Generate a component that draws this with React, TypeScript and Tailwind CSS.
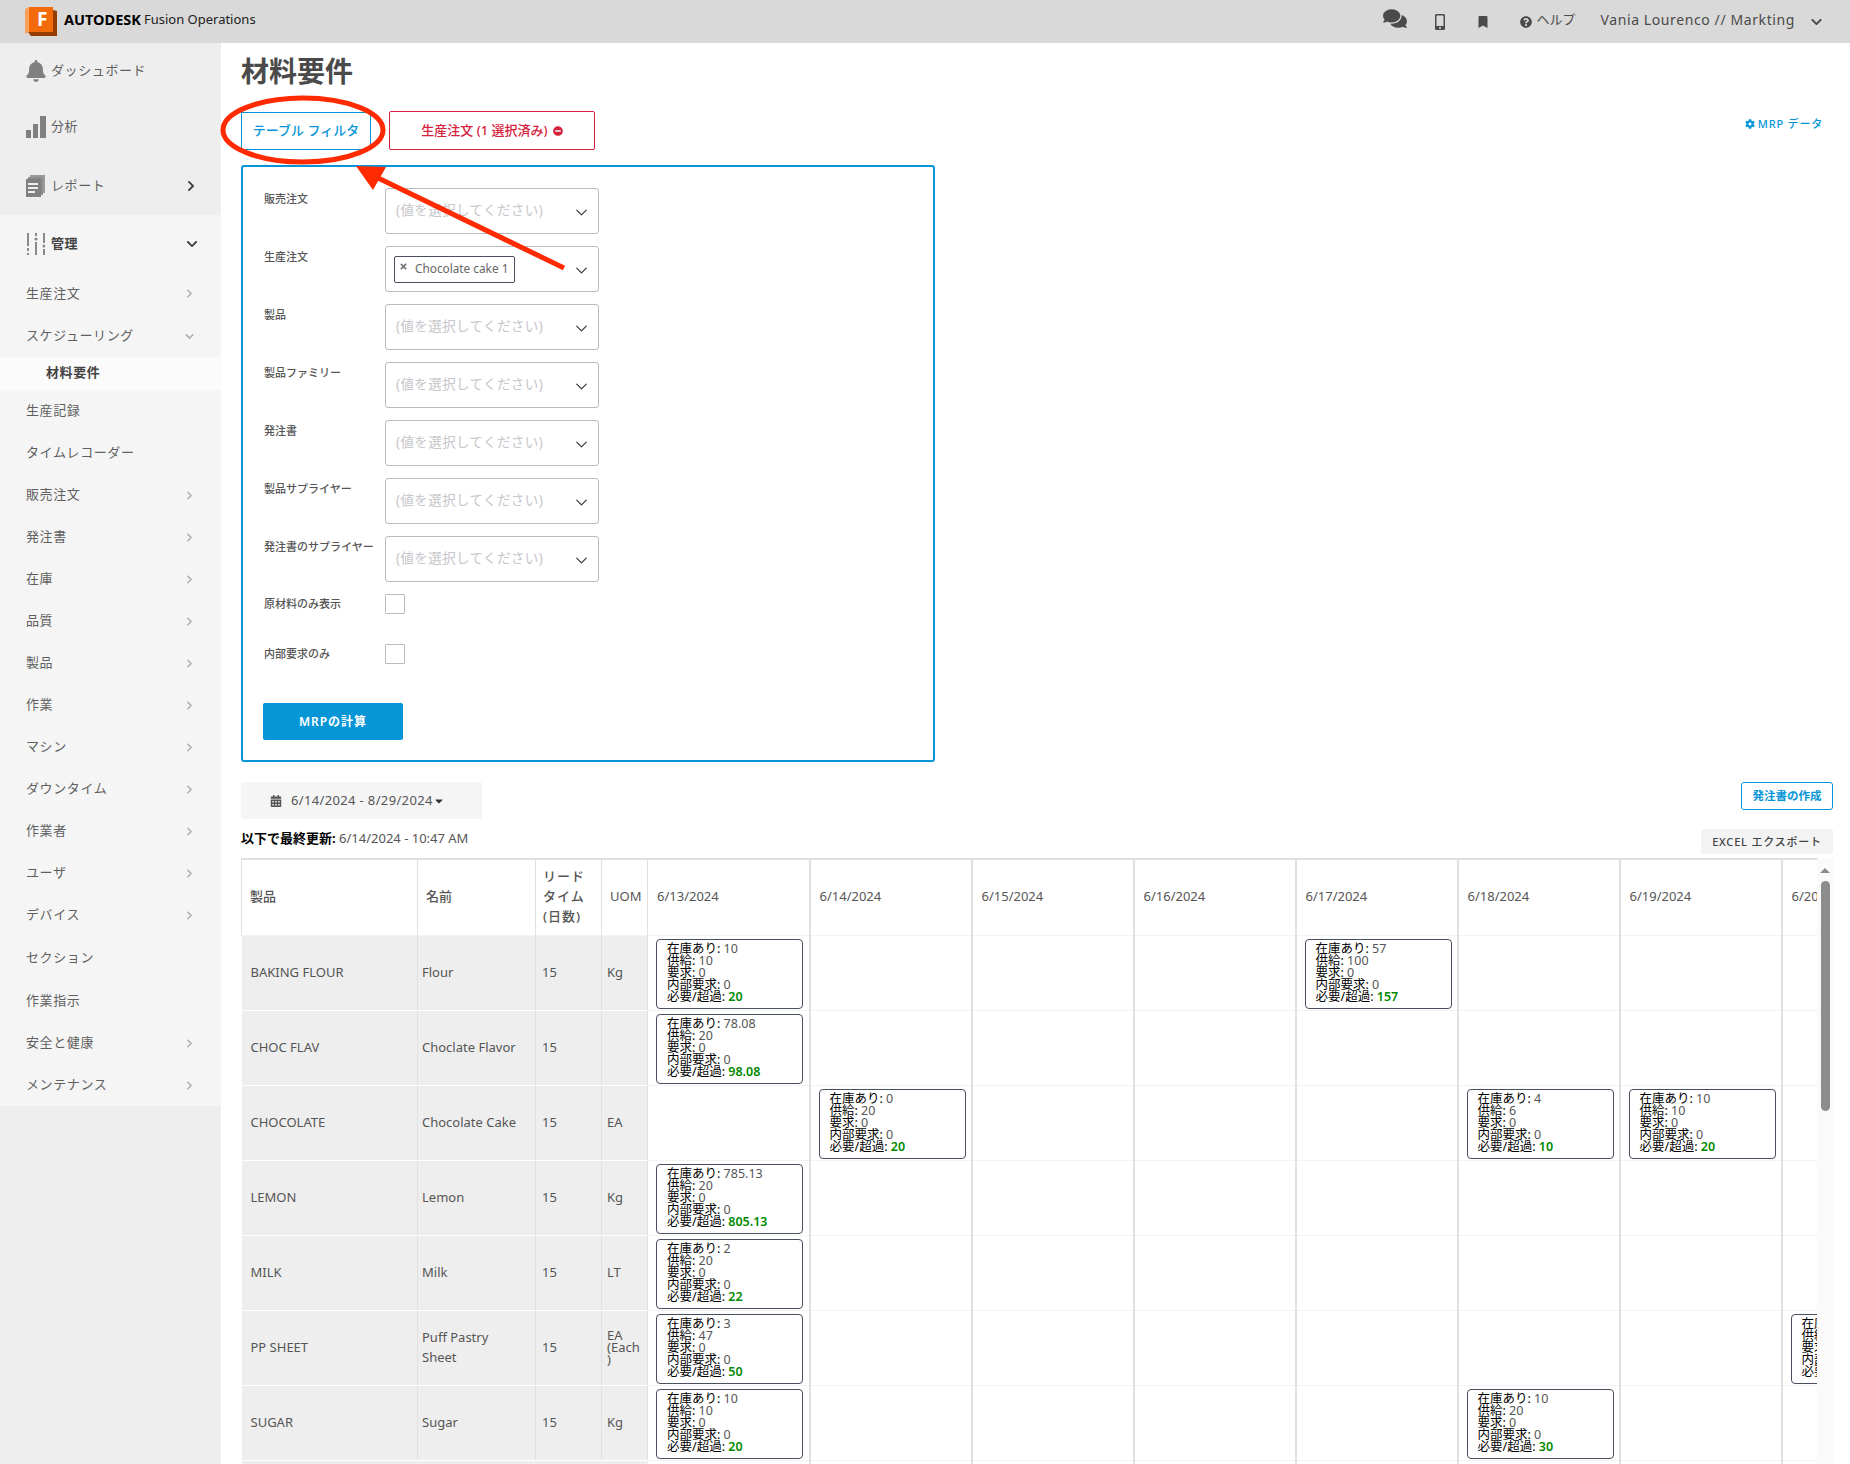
import { ChevronDown, ChevronRight } from "lucide-react";
import {
  FaBell,
  FaBookmark,
  FaCalendarAlt,
  FaCaretDown,
  FaChevronDown,
  FaChevronRight,
  FaCog,
  FaComments,
  FaMinusCircle,
  FaMobileAlt,
  FaQuestionCircle,
  FaTimes,
} from "react-icons/fa";

type Stock = { a: string; s: string; t: string };
type Row = {
  code: string;
  name: string;
  uom: string;
  cells: Record<number, Stock>;
};

const rows: Row[] = [
  {
    code: "BAKING FLOUR",
    name: "Flour",
    uom: "Kg",
    cells: {
      0: { a: "10", s: "10", t: "20" },
      4: { a: "57", s: "100", t: "157" },
    },
  },
  {
    code: "CHOC FLAV",
    name: "Choclate Flavor",
    uom: "",
    cells: { 0: { a: "78.08", s: "20", t: "98.08" } },
  },
  {
    code: "CHOCOLATE",
    name: "Chocolate Cake",
    uom: "EA",
    cells: {
      1: { a: "0", s: "20", t: "20" },
      5: { a: "4", s: "6", t: "10" },
      6: { a: "10", s: "10", t: "20" },
    },
  },
  {
    code: "LEMON",
    name: "Lemon",
    uom: "Kg",
    cells: { 0: { a: "785.13", s: "20", t: "805.13" } },
  },
  {
    code: "MILK",
    name: "Milk",
    uom: "LT",
    cells: { 0: { a: "2", s: "20", t: "22" } },
  },
  {
    code: "PP SHEET",
    name: "Puff Pastry\nSheet",
    uom: "EA\n(Each\n)",
    cells: {
      0: { a: "3", s: "47", t: "50" },
      7: { a: "6", s: "20", t: "26" },
    },
  },
  {
    code: "SUGAR",
    name: "Sugar",
    uom: "Kg",
    cells: {
      0: { a: "10", s: "10", t: "20" },
      5: { a: "10", s: "20", t: "30" },
    },
  },
];

const dates = [
  "6/13/2024",
  "6/14/2024",
  "6/15/2024",
  "6/16/2024",
  "6/17/2024",
  "6/18/2024",
  "6/19/2024",
  "6/20/2024",
];

const filters = ["販売注文", "生産注文", "製品", "製品ファミリー", "発注書", "製品サプライヤー", "発注書のサプライヤー"];

const navBottom: [string, boolean][] = [
  ["生産記録", false],
  ["タイムレコーダー", false],
  ["販売注文", true],
  ["発注書", true],
  ["在庫", true],
  ["品質", true],
  ["製品", true],
  ["作業", true],
  ["マシン", true],
  ["ダウンタイム", true],
  ["作業者", true],
  ["ユーザ", true],
  ["デバイス", true],
  ["セクション", false],
  ["作業指示", false],
  ["安全と健康", true],
  ["メンテナンス", true],
];

function Logo() {
  return (
    <svg width="32" height="30" viewBox="0 0 32 30">
      <path d="M0 2L4 0v25l-4 2z" fill="#f9a05a" />
      <path d="M3 25h29v4H6z" fill="#963c00" />
      <path d="M28 3l4 1v25h-4z" fill="#963c00" />
      <rect x="4" y="0" width="24" height="25" fill="#f26a09" />
      <text x="12" y="19" fontSize="19" fontWeight="700" fill="#ffffff" fontFamily="Noto Sans">
        F
      </text>
    </svg>
  );
}

function BarsIcon() {
  return (
    <svg width="20" height="22" viewBox="0 0 20 22" fill="#808080">
      <rect x="0" y="14" width="5" height="8" />
      <rect x="7" y="8" width="5" height="14" />
      <rect x="14" y="0" width="6" height="22" />
    </svg>
  );
}

function ReportIcon() {
  return (
    <svg width="19" height="22" viewBox="0 0 19 22">
      <path d="M4 0h15v18h-2V2H4z" fill="#9a9a9a" />
      <path d="M2 2h15v18h-2V4H2z" fill="#8c8c8c" />
      <rect x="0" y="4" width="15" height="18" fill="#808080" />
      <rect x="2" y="8" width="10" height="2" fill="#eeeeee" />
      <rect x="2" y="12" width="10" height="2" fill="#eeeeee" />
      <rect x="2" y="16" width="7" height="2" fill="#eeeeee" />
    </svg>
  );
}

function SlidersIcon() {
  return (
    <svg width="18" height="22" viewBox="0 0 18 22" fill="#8a8a8a">
      <rect x="0" y="0" width="2" height="13" />
      <rect x="0" y="15" width="2" height="3" />
      <rect x="0" y="20" width="2" height="2" />
      <rect x="8" y="0" width="2" height="3" />
      <circle cx="9" cy="6" r="1.6" />
      <rect x="8" y="9" width="2" height="13" />
      <rect x="16" y="0" width="2" height="10" />
      <circle cx="17" cy="13" r="1.6" />
      <rect x="16" y="16" width="2" height="6" />
    </svg>
  );
}

function StockCard({ stock }: { stock: Stock }) {
  return (
    <div className="ml-[8px] h-[70px] w-[147px] rounded-[4px] border border-[#4a4f5f] bg-white pt-[3px] pl-[10px] text-left text-[12.5px] leading-[12px] text-black whitespace-nowrap">
      <div>
        在庫あり: <span className="text-[#555555]">{stock.a}</span>
      </div>
      <div>
        供給: <span className="text-[#555555]">{stock.s}</span>
      </div>
      <div>
        要求: <span className="text-[#555555]">0</span>
      </div>
      <div>
        内部要求: <span className="text-[#555555]">0</span>
      </div>
      <div>
        必要/超過: <span className="font-semibold text-[#008a00]">{stock.t}</span>
      </div>
    </div>
  );
}

function Sidebar() {
  return (
    <aside className="w-[221px] shrink-0 bg-[#eeeeee] text-[13px] tracking-[0.6px] text-[#5f5f5f]">
      <div className="flex h-[55px] items-center pl-[25px]">
        <FaBell className="mr-[4px] h-[22px] w-[22px] text-[#808080]" />
        ダッシュボード
      </div>
      <div className="flex h-[58px] items-center pl-[26px]">
        <BarsIcon />
        <span className="ml-[5px]">分析</span>
      </div>
      <div className="flex h-[59px] items-center pl-[26px] pr-[24px]">
        <ReportIcon />
        <span className="ml-[6px] flex-1">レポート</span>
        <FaChevronRight className="h-[12px] w-[12px] text-[#444444]" />
      </div>
      <div className="h-[891px] bg-[#f5f5f5]">
        <div className="flex h-[57px] items-center pl-[27px] pr-[23px] font-semibold text-[#444444]">
          <SlidersIcon />
          <span className="ml-[6px] flex-1">管理</span>
          <FaChevronDown className="h-[12px] w-[12px]" />
        </div>
        <div className="flex h-[43px] items-center pl-[26px] pr-[25px]">
          <span className="flex-1">生産注文</span>
          <ChevronRight className="h-[13px] w-[13px] text-[#b0b0b0]" strokeWidth={3} />
        </div>
        <div className="flex h-[42px] items-center pl-[26px] pr-[25px]">
          <span className="flex-1">スケジューリング</span>
          <ChevronDown className="h-[13px] w-[13px] text-[#b0b0b0]" strokeWidth={3} />
        </div>
        <div className="flex h-[33px] items-center bg-[#fbfbfb] pb-[2px] pl-[46px] font-semibold text-[#444444]">材料要件</div>
        {navBottom.map(([label, more]) => (
          <div
            key={label}
            className={label === "セクション" ? "flex h-[44px] items-center pl-[26px] pr-[25px]" : "flex h-[42px] items-center pl-[26px] pr-[25px]"}
          >
            <span className="flex-1">{label}</span>
            {more && <ChevronRight className="h-[13px] w-[13px] text-[#b0b0b0]" strokeWidth={3} />}
          </div>
        ))}
      </div>
    </aside>
  );
}

function FilterPanel() {
  return (
    <div className="mt-[15px] h-[597px] w-[694px] rounded-[3px] border-2 border-[#0696d7] pt-[21px] pl-[21px]">
      <div className="flex flex-col gap-[12px]">
        {filters.map((label, i) => (
          <div key={label} className="flex">
            <div className="w-[121px] pt-[1px] text-[11px] font-medium leading-[20px] text-[#555555]">{label}</div>
            <div className="flex h-[46px] w-[214px] items-center rounded-[3px] border border-[#b9bac2] pl-[10px] pr-[7px]">
              {i === 1 ? (
                <div className="-ml-[2px] flex h-[27px] w-[121px] items-center rounded-[2px] border border-[#4a4f5f] pl-[4px] pb-[1px] text-[11.8px] text-[#666666]">
                  <FaTimes className="mr-[7px] mb-[5px] h-[9px] w-[9px] text-[#777777]" />
                  Chocolate cake 1
                </div>
              ) : (
                <span className="pb-[1px] text-[13.5px] tracking-[0.4px] text-[#c6c6cb]">(値を選択してください)</span>
              )}
              <ChevronDown className="mt-[3px] ml-auto h-[19px] w-[19px] text-[#3c3c3c]" strokeWidth={1.6} />
            </div>
          </div>
        ))}
      </div>
      <div className="mt-[12px] flex items-center text-[11px] font-medium text-[#555555]">
        <span className="w-[121px]">原材料のみ表示</span>
        <span className="h-[20px] w-[20px] rounded-[1px] border border-[#b9bac2]" />
      </div>
      <div className="mt-[30px] flex items-center text-[11px] font-medium text-[#555555]">
        <span className="w-[121px]">内部要求のみ</span>
        <span className="h-[20px] w-[20px] rounded-[1px] border border-[#b9bac2]" />
      </div>
      <button className="-ml-[1px] mt-[39px] flex h-[37px] w-[140px] items-center justify-center rounded-[2px] bg-[#0696d7] pt-[1px] text-[12px] font-semibold tracking-[1px] text-white">
        MRPの計算
      </button>
    </div>
  );
}

function ScheduleTable() {
  return (
    <div className="mt-[4px] flex">
      <div className="w-[1576px] overflow-hidden">
        <table className="w-[1702px] table-fixed border-collapse border-t-2 border-[#e0e0e0] text-[13px] text-[#555555]">
          <colgroup>
            <col className="w-[176px]" />
            <col className="w-[118px]" />
            <col className="w-[66px]" />
            <col className="w-[46px]" />
            {dates.map((d) => (
              <col key={d} className="w-[162px]" />
            ))}
          </colgroup>
          <thead>
            <tr className="h-[76px] border-b border-[#f2f2f2]">
              <th className="border-r border-l border-[#e0e0e0] pb-[2px] pl-[8px] text-left font-medium">製品</th>
              <th className="border-r border-[#e0e0e0] pb-[2px] pl-[8px] text-left font-medium">名前</th>
              <th className="border-r border-[#e0e0e0] pb-[2px] pl-[7px] text-left font-medium leading-[20px] tracking-[1px]">
                リード
                <br />
                タイム
                <br />
                (日数)
              </th>
              <th className="border-r border-[#e0e0e0] pb-[2px] pl-[8px] text-left font-normal">UOM</th>
              {dates.map((d) => (
                <th key={d} className="border-r-2 border-[#e0e0e0] pb-[2px] pl-[9px] text-left font-normal">
                  {d}
                </th>
              ))}
            </tr>
          </thead>
          <tbody>
            {rows.map((row) => (
              <tr key={row.code} className="h-[75px] border-b border-[#f2f2f2]">
                <td className="border-r border-b border-[#e0e0e0] border-b-white bg-[#eeeeee] pl-[9px]">{row.code}</td>
                <td className="whitespace-pre-line border-r border-b border-[#e0e0e0] border-b-white bg-[#eeeeee] pb-[2px] pl-[4px] leading-[20px]">
                  {row.name}
                </td>
                <td className="border-r border-b border-[#e0e0e0] border-b-white bg-[#eeeeee] pl-[6px]">15</td>
                <td className="whitespace-pre-line border-r border-b border-[#e0e0e0] border-b-white bg-[#eeeeee] pb-[2px] pl-[5px] leading-[12px]">
                  {row.uom}
                </td>
                {dates.map((d, i) => (
                  <td key={d} className="border-r-2 border-[#e0e0e0] p-0 pt-[3px] align-top">
                    {row.cells[i] && <StockCard stock={row.cells[i]} />}
                  </td>
                ))}
              </tr>
            ))}
            <tr className="h-[75px]">
              <td colSpan={4} className="bg-[#eeeeee]" />
              {dates.map((d) => (
                <td key={d} className="border-r-2 border-[#e0e0e0]" />
              ))}
            </tr>
          </tbody>
        </table>
      </div>
      <div className="flex h-[620px] w-[16px] flex-col items-center bg-[#fafafa] pt-[10px]">
        <div className="h-0 w-0 border-x-[5px] border-b-[5px] border-x-transparent border-b-[#8c8c8c]" />
        <div className="mt-[8px] h-[230px] w-[9px] rounded-[5px] bg-[#8c8c8c]" />
      </div>
    </div>
  );
}

export default function App() {
  return (
    <div className="relative h-[1464px] w-full overflow-hidden bg-white font-['Noto_Sans','Noto_Sans_CJK_JP',sans-serif]">
      <header className="flex h-[43px] items-center bg-[#d9d9d9] pl-[25px] pr-[27px] text-[#4a4a4a]">
        <Logo />
        <span className="ml-[7px] pb-[3px] text-[14.5px] font-bold text-black">AUTODESK</span>
        <span className="ml-[3px] pb-[3px] text-[13px] text-[#222222]">Fusion Operations</span>
        <FaComments className="ml-auto h-[23px] w-[24px] -translate-y-[3px]" />
        <FaMobileAlt className="ml-[27px] h-[16px] w-[12px]" />
        <FaBookmark className="ml-[32px] h-[12px] w-[10px]" />
        <FaQuestionCircle className="ml-[32px] h-[12px] w-[12px]" />
        <span className="ml-[5px] pb-[3px] text-[13px]">ヘルプ</span>
        <span className="ml-[25px] pb-[4px] text-[14px] tracking-[0.6px]">Vania Lourenco // Markting</span>
        <FaChevronDown className="ml-[15px] h-[12px] w-[13px]" />
      </header>

      <div className="flex">
        <Sidebar />
        <main className="min-w-0 flex-1 pt-[10px] pl-[20px] pr-[17px]">
          <h1 className="text-[28px] font-bold leading-[36px] text-[#4a4a4a]">材料要件</h1>

          <div className="mt-[22px] flex items-start">
            <button className="mt-[1px] flex h-[38px] w-[130px] items-center justify-center border border-[#0696d7] text-[13px] font-medium text-[#0696d7]">
              テーブル フィルタ
            </button>
            <button className="ml-[18px] flex h-[39px] w-[206px] items-center justify-center gap-[5px] rounded-[2px] border border-[#d6213c] pt-[1px] text-[13px] font-medium text-[#d6213c]">
              生産注文 (1 選択済み)
              <FaMinusCircle className="h-[10px] w-[10px]" />
            </button>
            <div className="ml-auto mt-[5px] flex items-center gap-[3px] pr-[10px] text-[11px] font-medium tracking-[0.8px] text-[#0696d7]">
              <FaCog className="h-[10px] w-[10px]" />
              MRP データ
            </div>
          </div>

          <FilterPanel />

          <div className="mt-[20px] flex items-start justify-between">
            <div className="flex h-[37px] w-[241px] items-center rounded-[2px] bg-[#f5f5f5] pt-[1px] pl-[29px] text-[13px] tracking-[0.35px] text-[#555555]">
              <FaCalendarAlt className="mr-[9px] h-[12px] w-[12px]" />
              6/14/2024 - 8/29/2024
              <FaCaretDown className="ml-[1px] h-[12px] w-[10px] text-[#333333]" />
            </div>
            <button className="flex h-[28px] w-[92px] items-center justify-center rounded-[3px] border border-[#0696d7] pb-[1px] text-[11.5px] font-bold text-[#0696d7]">
              発注書の作成
            </button>
          </div>

          <div className="mt-[10px] flex h-[25px] items-start justify-between">
            <div className="text-[13px] leading-[18px] text-[#555555]">
              <span className="font-bold text-black">以下で最終更新:</span> 6/14/2024 - 10:47 AM
            </div>
            <button className="flex h-[25px] w-[132px] items-center justify-center rounded-[2px] bg-[#f3f3f3] pt-[1px] text-[11px] font-medium tracking-[0.8px] text-[#444444]">
              EXCEL エクスポート
            </button>
          </div>

          <ScheduleTable />
        </main>
      </div>

      {/* red hand-drawn annotation on top of the page */}
      <svg className="pointer-events-none absolute top-0 left-0 h-[300px] w-[700px]" viewBox="0 0 700 300">
        <ellipse cx="303" cy="130" rx="80" ry="32" fill="none" stroke="#ff2a00" strokeWidth="5" />
        <line x1="564" y1="268" x2="374" y2="176" stroke="#ff2a00" strokeWidth="5" />
        <polygon points="356,166 386,167 373,190" fill="#ff2a00" />
      </svg>
    </div>
  );
}
